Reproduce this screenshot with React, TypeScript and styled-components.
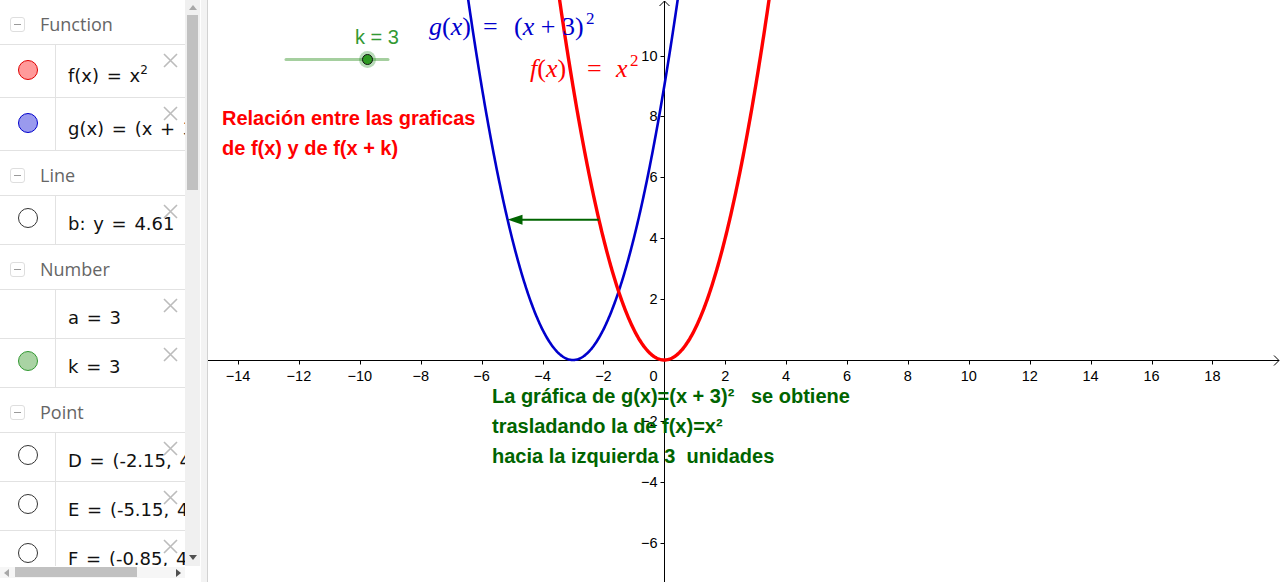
import React from 'react';
import styled, { createGlobalStyle } from 'styled-components';

const Global = createGlobalStyle`
  html, body { margin: 0; padding: 0; background: #fff; }
  body { width: 1280px; height: 582px; overflow: hidden; font-family: "Open Sans", "Liberation Sans", sans-serif; }
`;

const Page = styled.div`
  display: flex;
  width: 1280px;
  height: 582px;
  overflow: hidden;
  background: #fff;
`;

/* ---------- Algebra panel ---------- */
const AlgebraPanel = styled.div`
  flex: none;
  width: 200px;
  height: 582px;
  display: grid;
  grid-template-columns: 185px 15px;
  grid-template-rows: 566px 16px;
  background: #fff;
`;

const List = styled.div`
  overflow: hidden;
  display: flex;
  flex-direction: column;
`;

const Header = styled.div`
  flex: none;
  height: 45px;
  box-sizing: border-box;
  border-bottom: 1px solid #e2e2e2;
  display: flex;
  align-items: center;
  gap: 15px;
  padding: 4px 0 0 10px;
  color: #666;
  font-family: "Open Sans", "Liberation Sans", sans-serif;
  font-size: 18px;
`;

const Collapse = styled.span`
  width: 15px;
  height: 15px;
  box-sizing: border-box;
  border: 1px solid #dedede;
  border-radius: 3px;
  display: flex;
  align-items: center;
  justify-content: center;
  &::after {
    content: "";
    width: 7px;
    height: 1px;
    background: #9a9a9a;
  }
`;

const Row = styled.div<{ $tall?: boolean }>`
  flex: none;
  position: relative;
  height: ${(p) => (p.$tall ? 53 : 49)}px;
  box-sizing: border-box;
  border-bottom: 1px solid #e2e2e2;
  display: grid;
  grid-template-columns: 56px 1fr;
`;

const MarkerCell = styled.div<{ $tall?: boolean }>`
  border-right: 1px solid #e2e2e2;
  display: flex;
  justify-content: center;
  align-items: flex-start;
  padding-top: ${(p) => (p.$tall ? 15 : 12)}px;
`;

const Dot = styled.span<{ $fill: string; $stroke: string }>`
  width: 20px;
  height: 20px;
  box-sizing: border-box;
  border-radius: 50%;
  background: ${(p) => p.$fill};
  border: 1px solid ${(p) => p.$stroke};
`;

const Formula = styled.div<{ $tall?: boolean }>`
  overflow: hidden;
  white-space: nowrap;
  padding: ${(p) => (p.$tall ? 20 : 17)}px 0 0 12px;
  font-family: "DejaVu Sans", sans-serif;
  font-size: 18px;
  line-height: 22px;
  word-spacing: 2px;
  color: #111;
`;

const Sup = styled.sup`
  font-size: 12px;
  vertical-align: 8px;
  line-height: 0;
`;

const DeleteBtn = styled.svg`
  position: absolute;
  top: 8px;
  right: 7px;
  width: 15px;
  height: 15px;
`;

const VScroll = styled.div`
  background: #f0f0f0;
  display: flex;
  flex-direction: column;
  align-items: center;
`;

const ArrowBox = styled.div<{ $h: number; $w: number }>`
  flex: none;
  height: ${(p) => p.$h}px;
  width: ${(p) => p.$w}px;
  display: flex;
  align-items: center;
  justify-content: center;
`;

const Tri = styled.span<{ $dir: 'up' | 'down' | 'left' | 'right'; $color: string }>`
  width: 0;
  height: 0;
  border: 4px solid transparent;
  ${(p) =>
    p.$dir === 'up'
      ? `border-bottom: 5px solid ${p.$color}; border-top-width: 0;`
      : p.$dir === 'down'
      ? `border-top: 5px solid ${p.$color}; border-bottom-width: 0;`
      : p.$dir === 'left'
      ? `border-right: 5px solid ${p.$color}; border-left-width: 0;`
      : `border-left: 5px solid ${p.$color}; border-right-width: 0;`}
`;

const VThumb = styled.div`
  flex: none;
  width: 11px;
  height: 175px;
  margin-top: 1px;
  background: #c1c1c1;
`;

const Spacer = styled.div`
  flex: 1;
`;

const HScroll = styled.div`
  display: flex;
  align-items: flex-start;
  background: #f6f6f6;
  height: 11px;
  margin-top: 1px;
`;

const HThumb = styled.div`
  flex: none;
  width: 122px;
  height: 10px;
  margin-left: 3px;
  background: #c1c1c1;
`;

const Corner = styled.div`
  background: #fff;
`;

const Divider = styled.div`
  flex: none;
  width: 8px;
  height: 582px;
  box-sizing: border-box;
  border-left: 1px solid #fff;
  border-right: 1px solid #d2d2d2;
  background: #f3f3f3;
`;

/* ---------- Graphics view ---------- */
const Graphics = styled.div`
  flex: 1;
  height: 582px;
  position: relative;
  overflow: hidden;
`;

const Canvas = styled.svg`
  display: block;
  width: 1072px;
  height: 582px;
`;

const AxisLabel = styled.text`
  font-family: "Liberation Sans", Arial, sans-serif;
  font-size: 14.5px;
  fill: #000;
`;

const Note = styled.text<{ $color: string }>`
  font-family: "Liberation Sans", Arial, sans-serif;
  font-weight: 700;
  font-size: 20px;
  fill: ${(p) => p.$color};
  white-space: pre;
`;

const MathText = styled.text<{ $color: string }>`
  font-family: "Liberation Serif", "Times New Roman", serif;
  font-size: 26px;
  fill: ${(p) => p.$color};
  white-space: pre;
`;

const Italic = styled.tspan`
  font-style: italic;
`;

const SupT = styled.tspan`
  font-size: 17px;
`;

const SliderLabel = styled.text`
  font-family: "Liberation Sans", Arial, sans-serif;
  font-size: 20px;
  fill: #339933;
`;

const W = 1072;
const H = 582;
const OX = 456.3;
const OY = 360;
const U = 30.45;
const px = (x: number) => OX + x * U;
const py = (y: number) => OY - y * U;

function parabola(h: number): string {
  const pts: string[] = [];
  for (let x = -h - 3.8; x <= -h + 3.8; x += 0.02) {
    pts.push(`${px(x).toFixed(2)},${py((x + h) * (x + h)).toFixed(2)}`);
  }
  return 'M' + pts.join('L');
}

const minus = (n: number) => (n < 0 ? '\u2212' + Math.abs(n) : String(n));

const Cross = () => (
  <DeleteBtn viewBox="0 0 15 15">
    <path d="M1 1L14 14M14 1L1 14" stroke="#bcbcbc" strokeWidth="1.6" fill="none" />
  </DeleteBtn>
);

type Marker = { fill: string; stroke: string } | null;
type Item =
  | { kind: 'header'; label: string }
  | { kind: 'row'; marker: Marker; tall?: boolean; content: React.ReactNode };

const hollow = { fill: '#fff', stroke: '#333' };

const items: Item[] = [
  { kind: 'header', label: 'Function' },
  {
    kind: 'row',
    tall: true,
    marker: { fill: '#ff9a9a', stroke: '#e00000' },
    content: (
      <>
        f(x) = x<Sup>2</Sup>
      </>
    ),
  },
  {
    kind: 'row',
    tall: true,
    marker: { fill: '#9a9aee', stroke: '#0000cc' },
    content: <>g(x) = (x + 3)</>,
  },
  { kind: 'header', label: 'Line' },
  { kind: 'row', marker: hollow, content: <>b: y = 4.61</> },
  { kind: 'header', label: 'Number' },
  { kind: 'row', marker: null, content: <>a = 3</> },
  { kind: 'row', marker: { fill: '#a9d3a3', stroke: '#339933' }, content: <>k = 3</> },
  { kind: 'header', label: 'Point' },
  { kind: 'row', marker: hollow, content: <>D = (-2.15, 4.61)</> },
  { kind: 'row', marker: hollow, content: <>E = (-5.15, 4.61)</> },
  { kind: 'row', marker: hollow, content: <>F = (-0.85, 4.61)</> },
];

const xTicks = [-14, -12, -10, -8, -6, -4, -2, 2, 4, 6, 8, 10, 12, 14, 16, 18];
const yTicks = [-6, -4, -2, 2, 4, 6, 8, 10];

const AlgebraView = () => (
  <AlgebraPanel>
    <List>
      {items.map((it, i) =>
        it.kind === 'header' ? (
          <Header key={i}>
            <Collapse />
            {it.label}
          </Header>
        ) : (
          <Row key={i} $tall={it.tall}>
            <MarkerCell $tall={it.tall}>
              {it.marker && <Dot $fill={it.marker.fill} $stroke={it.marker.stroke} />}
            </MarkerCell>
            <Formula $tall={it.tall}>{it.content}</Formula>
            <Cross />
          </Row>
        )
      )}
    </List>
    <VScroll>
      <ArrowBox $h={14} $w={15}>
        <Tri $dir="up" $color="#a8a8a8" />
      </ArrowBox>
      <VThumb />
      <Spacer />
      <ArrowBox $h={18} $w={15}>
        <Tri $dir="down" $color="#505050" />
      </ArrowBox>
    </VScroll>
    <HScroll>
      <ArrowBox $h={11} $w={12}>
        <Tri $dir="left" $color="#a8a8a8" />
      </ArrowBox>
      <HThumb />
      <Spacer />
      <ArrowBox $h={11} $w={14}>
        <Tri $dir="right" $color="#505050" />
      </ArrowBox>
    </HScroll>
    <Corner />
  </AlgebraPanel>
);

const GraphicsView = () => {
  const ax = Math.round(OX) + 0.5;
  const ay = OY + 0.5;
  const arrowY = py(4.61);
  const tipX = px(-5.15);
  const tailX = px(-2.15);
  return (
    <Graphics>
      <Canvas viewBox={`0 0 ${W} ${H}`}>
        {/* axes */}
        <path d={`M0 ${ay}H${W - 1}`} stroke="#000" strokeWidth="1" fill="none" />
        <path d={`M${W - 6} ${ay - 5}L${W - 1} ${ay}L${W - 6} ${ay + 5}`} stroke="#000" strokeWidth="1" fill="none" />
        <path d={`M${ax} ${H}V1`} stroke="#000" strokeWidth="1" fill="none" />
        <path d={`M${ax - 5} 6L${ax} 1L${ax + 5} 6`} stroke="#000" strokeWidth="1" fill="none" />
        {xTicks.map((t) => (
          <g key={'x' + t}>
            <path d={`M${Math.round(px(t)) + 0.5} ${ay}V${ay + 4}`} stroke="#000" strokeWidth="1" />
            <AxisLabel x={px(t)} y={381} textAnchor="middle">
              {minus(t)}
            </AxisLabel>
          </g>
        ))}
        {yTicks.map((t) => (
          <g key={'y' + t}>
            <path d={`M${ax - 4} ${Math.round(py(t)) + 0.5}H${ax}`} stroke="#000" strokeWidth="1" />
            <AxisLabel x={ax - 7} y={py(t) + 5} textAnchor="end">
              {minus(t)}
            </AxisLabel>
          </g>
        ))}
        <AxisLabel x={ax - 7} y={381} textAnchor="end">
          0
        </AxisLabel>

        {/* curves */}
        <path d={parabola(3)} stroke="#0000cc" strokeWidth="2.6" fill="none" />
        <path d={parabola(0)} stroke="#ff0000" strokeWidth="3.4" fill="none" />

        {/* translation vector */}
        <path d={`M${tailX} ${arrowY}H${tipX + 12}`} stroke="#006400" strokeWidth="2" fill="none" />
        <path d={`M${tipX} ${arrowY}L${tipX + 15} ${arrowY - 5}L${tipX + 15} ${arrowY + 5}Z`} fill="#006400" />

        {/* function labels */}
        <MathText $color="#0000cc" y={35}>
          <tspan x={221}>
            <Italic>g</Italic>(<Italic>x</Italic>)
          </tspan>
          <tspan x={275}>=</tspan>
          <tspan x={306}>
            (<Italic>x</Italic> + 3)
          </tspan>
        </MathText>
        <MathText $color="#0000cc" y={24}>
          <SupT x={378}>2</SupT>
        </MathText>
        <MathText $color="#ff0000" y={77}>
          <tspan x={322}>
            <Italic>f</Italic>(<Italic>x</Italic>)
          </tspan>
          <tspan x={379}>=</tspan>
          <tspan x={408}>
            <Italic>x</Italic>
          </tspan>
        </MathText>
        <MathText $color="#ff0000" y={66}>
          <SupT x={422}>2</SupT>
        </MathText>

        {/* slider k */}
        <path d="M78 59.5H180" stroke="#a5cf9f" strokeWidth="3" strokeLinecap="round" fill="none" />
        <circle cx={159.5} cy={59.5} r={8.5} fill="#339933" opacity="0.35" />
        <circle cx={159.5} cy={59.5} r={5} fill="#2e9a22" stroke="#111" strokeWidth="1" />
        <SliderLabel x={147} y={44}>
          k = 3
        </SliderLabel>

        {/* notes */}
        <Note $color="#ff0000" x={14} y={125}>
          Relación entre las graficas
        </Note>
        <Note $color="#ff0000" x={14} y={155}>
          de f(x) y de f(x + k)
        </Note>
        <Note $color="#006400" x={284} y={403}>
          La gráfica de g(x)=(x + 3)²   se obtiene
        </Note>
        <Note $color="#006400" x={284} y={433}>
          trasladando la de f(x)=x²
        </Note>
        <Note $color="#006400" x={284} y={463}>
          hacia la izquierda 3  unidades
        </Note>
      </Canvas>
    </Graphics>
  );
};

export default function App() {
  return (
    <>
      <Global />
      <Page>
        <AlgebraView />
        <Divider />
        <GraphicsView />
      </Page>
    </>
  );
}
